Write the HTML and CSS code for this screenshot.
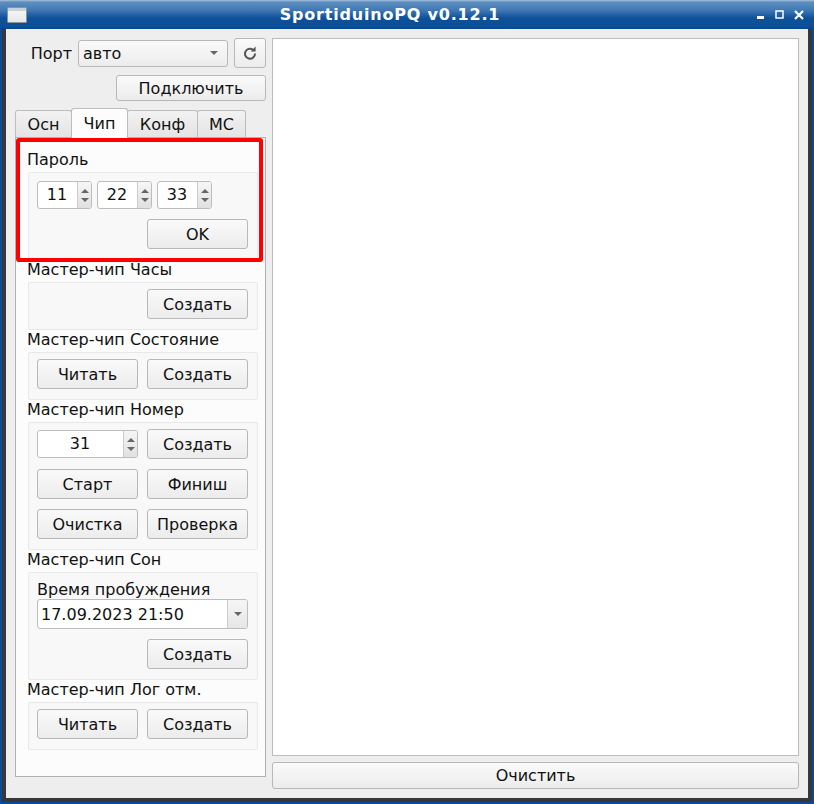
FILE: index.html
```html
<!DOCTYPE html>
<html lang="ru">
<head>
    <meta charset="UTF-8">
    <title>SportiduinoPQ v0.12.1</title>
    <link rel="stylesheet" href="styles.css">
</head>
<body>
    <div class="window">
        <div class="titlebar">
            <div class="win-icon"></div>
            <div class="win-title">SportiduinoPQ v0.12.1</div>
            <div class="win-buttons">
                <svg width="8" height="8" viewBox="0 0 8 8"><rect x="0" y="5" width="7" height="3" fill="#fff"/></svg>
                <svg width="9" height="9" viewBox="0 0 9 9"><rect x="1" y="1" width="7" height="7" fill="none" stroke="#fff" stroke-width="1.5"/></svg>
                <svg width="10" height="10" viewBox="0 0 10 10"><path d="M1 1L9 9M9 1L1 9" stroke="#fff" stroke-width="2.2"/></svg>
            </div>
        </div>
        <div class="content">
            <div class="left">
                <div class="port-row">
                    <span class="port-label">Порт</span>
                    <div class="combo"><span class="combo-text">авто</span><i class="arrow-down"></i></div>
                    <button class="btn btn-icon">
                        <svg width="16" height="16" viewBox="0 0 16 16"><path d="M11.6 5.2A5 5 0 1 0 13 8.6" fill="none" stroke="#555" stroke-width="2"/><path d="M8.6 6.4L13.6 6.4L13.6 1.6Z" fill="#555"/></svg>
                    </button>
                </div>
                <div class="connect-row"><button class="btn btn-connect">Подключить</button></div>
                <div class="tabs">
                    <div class="tab tab-1">Осн</div>
                    <div class="tab tab-2 active">Чип</div>
                    <div class="tab tab-3">Конф</div>
                    <div class="tab tab-4">МС</div>
                </div>
                <div class="panel">
                    <div class="highlight"></div>

                    <div class="group-label">Пароль</div>
                    <div class="frame">
                        <div class="spin-row">
                            <div class="spin"><span class="spin-val">11</span><span class="spin-btns"><i class="arrow-up"></i><i class="arrow-down"></i></span></div>
                            <div class="spin"><span class="spin-val">22</span><span class="spin-btns"><i class="arrow-up"></i><i class="arrow-down"></i></span></div>
                            <div class="spin"><span class="spin-val">33</span><span class="spin-btns"><i class="arrow-up"></i><i class="arrow-down"></i></span></div>
                        </div>
                        <div class="row"><span></span><button class="btn">OK</button></div>
                    </div>

                    <div class="group-label">Мастер-чип Часы</div>
                    <div class="frame">
                        <div class="row"><span></span><button class="btn">Создать</button></div>
                    </div>

                    <div class="group-label">Мастер-чип Состояние</div>
                    <div class="frame">
                        <div class="row"><button class="btn">Читать</button><button class="btn">Создать</button></div>
                    </div>

                    <div class="group-label">Мастер-чип Номер</div>
                    <div class="frame">
                        <div class="row">
                            <div class="spin spin-wide"><span class="spin-val">31</span><span class="spin-btns"><i class="arrow-up"></i><i class="arrow-down"></i></span></div>
                            <button class="btn">Создать</button>
                        </div>
                        <div class="row"><button class="btn">Старт</button><button class="btn">Финиш</button></div>
                        <div class="row"><button class="btn">Очистка</button><button class="btn">Проверка</button></div>
                    </div>

                    <div class="group-label">Мастер-чип Сон</div>
                    <div class="frame">
                        <div class="field-label">Время пробуждения</div>
                        <div class="date-edit"><span class="date-val">17.09.2023 21:50</span><span class="date-btn"><i class="arrow-down"></i></span></div>
                        <div class="row"><span></span><button class="btn">Создать</button></div>
                    </div>

                    <div class="group-label">Мастер-чип Лог отм.</div>
                    <div class="frame">
                        <div class="row"><button class="btn">Читать</button><button class="btn">Создать</button></div>
                    </div>
                </div>
            </div>
            <div class="right">
                <div class="log"></div>
                <button class="btn btn-clear">Очистить</button>
            </div>
        </div>
    </div>
</body>
</html>
```

FILE: styles.css
```css
* {
    box-sizing: border-box;
}

html, body {
    margin: 0;
    padding: 0;
}

body {
    width: 814px;
    height: 804px;
    font-family: "DejaVu Sans", sans-serif;
    font-size: 16px;
    color: #111;
    overflow: hidden;
}

.window {
    width: 814px;
    height: 804px;
    display: flex;
    flex-direction: column;
    background: #36393b;
    border: 2px solid #0b4a94;
    border-top: none;
}

.titlebar {
    height: 29px;
    margin: 0 -2px;
    flex: none;
    display: flex;
    align-items: center;
    padding: 0 10px 0 7px;
    background: linear-gradient(#a9c4de 0, #5f8fc0 2px, #4079b5 10px, #0f5199 18px, #0b4f98 27px, #08448a 29px);
}

.win-icon {
    width: 20px;
    height: 16px;
    margin-top: 1px;
    border: 1px solid #8a949c;
    border-radius: 1px;
    background: linear-gradient(#c9d1d8 0, #c9d1d8 3px, #f4f4f2 3px, #e8e8e6 100%);
}

.win-title {
    flex: 1;
    text-align: center;
    font-weight: bold;
    font-size: 16px;
    color: #fff;
    letter-spacing: 0.8px;
    margin-left: -4px;
}

.win-buttons {
    display: flex;
    align-items: center;
    gap: 10px;
}

.content {
    flex: 1;
    margin: 0 4px 4px;
    display: flex;
    gap: 6px;
    background: #eeeeee;
    padding: 9px;
    min-height: 0;
}

.left {
    width: 251px;
    flex: none;
    display: flex;
    flex-direction: column;
    margin-bottom: 12px;
}

.right {
    flex: 1;
    display: flex;
    flex-direction: column;
    gap: 6px;
}

.log {
    flex: 1;
    background: #fff;
    border: 1px solid #bdbdbd;
}

.btn {
    display: block;
    height: 30px;
    width: 101px;
    padding: 0;
    font-family: inherit;
    font-size: 16px;
    color: #111;
    border: 1px solid #b8b8b8;
    border-radius: 3px;
    background: linear-gradient(#fafafa, #ececec);
}

.btn-clear {
    width: 100%;
    height: 27px;
}

.btn-icon {
    width: 32px;
    display: flex;
    align-items: center;
    justify-content: center;
}

.btn-connect {
    width: 150px;
    height: 26px;
}

.port-row {
    display: flex;
    align-items: center;
    height: 30px;
}

.port-label {
    width: 63px;
    text-align: right;
    padding-right: 6px;
}

.combo {
    width: 150px;
    height: 27px;
    margin-right: 6px;
    display: flex;
    align-items: center;
    justify-content: space-between;
    padding: 0 9px 0 4px;
    border: 1px solid #b8b8b8;
    border-radius: 3px;
    background: linear-gradient(#fafafa, #ececec);
}

.connect-row {
    display: flex;
    justify-content: flex-end;
    margin-top: 7px;
}

.arrow-down,
.arrow-up {
    display: block;
    width: 0;
    height: 0;
    border-left: 4px solid transparent;
    border-right: 4px solid transparent;
}

.arrow-down {
    border-top: 4px solid #666;
}

.arrow-up {
    border-bottom: 4px solid #666;
}

.tabs {
    height: 29px;
    margin-top: 7px;
    display: flex;
    align-items: flex-end;
    position: relative;
    z-index: 1;
}

.tab {
    height: 27px;
    display: flex;
    align-items: center;
    justify-content: center;
    border: 1px solid #bdbdbd;
    border-bottom: none;
    border-radius: 3px 3px 0 0;
    background: linear-gradient(#f2f2f2, #e4e4e4);
    margin-right: -1px;
}

.tab.active {
    height: 30px;
    margin-bottom: -1px;
    background: #fcfcfc;
    position: relative;
}

.tab-1 { width: 57px; }
.tab-2 { width: 57px; }
.tab-3 { width: 71px; }
.tab-4 { width: 49px; }

.panel {
    flex: 1;
    position: relative;
    border: 1px solid #b0b0b0;
    background: #fcfcfc;
    padding: 12px 7px 0 12px;
}

.highlight {
    position: absolute;
    left: 0;
    top: 0;
    width: 247px;
    height: 124px;
    border: 4px solid #ff0000;
    border-radius: 3px;
    z-index: 2;
}

.group-label {
    height: 22px;
    line-height: 20px;
    margin-left: -1px;
}

.frame {
    border: 1px solid #e8e8e8;
    border-radius: 2px;
    background: #f8f8f8;
    padding: 6px 9px 10px 8px;
    display: flex;
    flex-direction: column;
    gap: 10px;
}

.row {
    display: flex;
    justify-content: space-between;
    align-items: center;
}

.spin-row {
    display: flex;
    gap: 5px;
    padding-top: 2px;
}

.spin {
    width: 55px;
    height: 28px;
    display: flex;
    border: 1px solid #bdbdbd;
    border-radius: 3px;
    background: #fff;
    overflow: hidden;
}

.spin-wide {
    width: 101px;
}

.spin-val {
    flex: 1;
    text-align: center;
    line-height: 26px;
    margin-right: 1px;
}

.spin-btns {
    width: 14px;
    display: flex;
    flex-direction: column;
    align-items: center;
    justify-content: center;
    gap: 5px;
    border-left: 1px solid #ccc;
    background: linear-gradient(#f6f6f6, #e0e0e0);
}

.field-label {
    height: 17px;
    line-height: 17px;
    margin-top: 2px;
    margin-bottom: -9px;
}

.date-edit {
    height: 30px;
    display: flex;
    border: 1px solid #bdbdbd;
    border-radius: 3px;
    background: #fff;
    overflow: hidden;
}

.date-val {
    flex: 1;
    line-height: 29px;
    padding-left: 3px;
}

.date-btn {
    width: 20px;
    display: flex;
    align-items: center;
    justify-content: center;
    border-left: 1px solid #ccc;
    background: linear-gradient(#f6f6f6, #e6e6e6);
}
```
